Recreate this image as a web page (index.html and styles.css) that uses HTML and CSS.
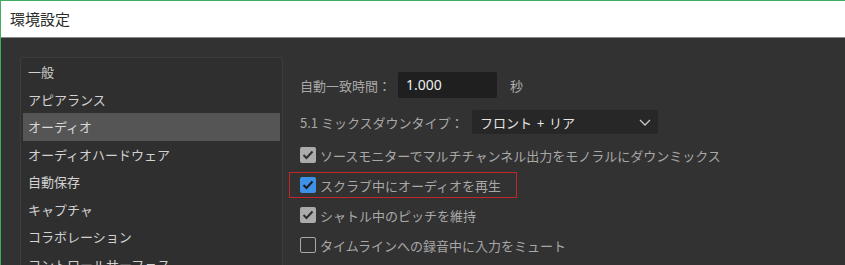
FILE: index.html
```html
<!DOCTYPE html>
<html lang="ja">
<head>
    <meta charset="UTF-8">
    <title>環境設定</title>
    <link rel="stylesheet" href="styles.css">
</head>
<body>

    <div class="window">

        <!-- Title bar -->
        <div class="titlebar">環境設定</div>

        <!-- Main area -->
        <div class="content">

            <!-- Category list -->
            <ul class="sidebar">
                <li class="item">一般</li>
                <li class="item">アピアランス</li>
                <li class="item selected">オーディオ</li>
                <li class="item">オーディオハードウェア</li>
                <li class="item">自動保存</li>
                <li class="item">キャプチャ</li>
                <li class="item">コラボレーション</li>
                <li class="item">コントロールサーフェス</li>
            </ul>

            <!-- Settings -->
            <div class="settings">
                <div class="row">
                    <span class="label label-time">自動一致時間：</span>
                    <span class="input">1.000</span>
                    <span class="unit">秒</span>
                </div>

                <div class="row row-select">
                    <span class="label label-mix">5.1 ミックスダウンタイプ：</span>
                    <span class="select">
                        <span class="select-value">フロント + リア</span>
                        <svg class="chevron" width="12" height="7" viewBox="0 0 12 7">
                            <path d="M1 1 L6 6 L11 1" fill="none" stroke="#c8c8c8" stroke-width="1.3"/>
                        </svg>
                    </span>
                </div>

                <div class="check">
                    <span class="box box-disabled">
                        <svg width="12" height="10" viewBox="0 0 12 10"><path d="M1.5 5 L4.5 8 L10.5 1.5" fill="none" stroke="#2e2e2e" stroke-width="2"/></svg>
                    </span>
                    ソースモニターでマルチチャンネル出力をモノラルにダウンミックス
                </div>

                <div class="check highlight">
                    <span class="box box-on">
                        <svg width="12" height="10" viewBox="0 0 12 10"><path d="M1.5 5 L4.5 8 L10.5 1.5" fill="none" stroke="#1a1a1a" stroke-width="2"/></svg>
                    </span>
                    スクラブ中にオーディオを再生
                </div>

                <div class="check">
                    <span class="box box-disabled">
                        <svg width="12" height="10" viewBox="0 0 12 10"><path d="M1.5 5 L4.5 8 L10.5 1.5" fill="none" stroke="#2e2e2e" stroke-width="2"/></svg>
                    </span>
                    シャトル中のピッチを維持
                </div>

                <div class="check">
                    <span class="box box-off"></span>
                    タイムラインへの録音中に入力をミュート
                </div>
            </div>
        </div>
    </div>

</body>
</html>
```

FILE: styles.css
```css
/* === Global === */
body {
    margin: 0;
    width: 845px;
    height: 265px;
    overflow: hidden;
    font-family: "Noto Sans CJK JP", "Noto Sans", sans-serif;
    background: #323232;
}

/* === Window frame === */
.window {
    border-top: 1px solid #3fae5e;
    border-left: 1px solid #3fae5e;
    height: 264px;
    display: flex;
    flex-direction: column;
}

.titlebar {
    height: 36px;
    background: #ffffff;
    border-bottom: 1px solid #8a8a8a;
    color: #2a2a2a;
    font-size: 15px;
    line-height: 36px;
    padding-left: 9px;
}

/* === Main area === */
.content {
    flex: 1;
    display: flex;
    align-items: flex-start;
    padding: 19px 0 0 19px;
    background: #323232;
    overflow: hidden;
}

/* === Category list === */
.sidebar {
    list-style: none;
    margin: 0;
    padding: 0 2px;
    width: 257px;
    height: 240px;
    background: #2f2f2f;
    border: 1px solid #3d3d3d;
    border-radius: 2px;
    flex-shrink: 0;
}

.item {
    height: 27.5px;
    line-height: 27.5px;
    padding-left: 5px;
    color: #d2d2d2;
    font-size: 13px;
    white-space: nowrap;
}

.item.selected {
    background: #555555;
    color: #d8d8d8;
}

/* === Settings column === */
.settings {
    margin-left: 17px;
    padding-top: 15px;
    display: flex;
    flex-direction: column;
    color: #a8a8a8;
    font-size: 13px;
}

.row {
    display: flex;
    align-items: center;
    height: 26px;
}

.row-select {
    margin-top: 12px;
    height: 24px;
}

.label-time { width: 98px; }
.label-mix { width: 172px; }

.input {
    width: 91px;
    height: 26px;
    line-height: 26px;
    padding-left: 8px;
    background: #1f1f1f;
    border-radius: 2px;
    color: #ececec;
    font-family: "Noto Sans", sans-serif;
    font-size: 14px;
}

.unit {
    margin-left: 13px;
    color: #b0b0b0;
}

.select {
    width: 178px;
    height: 24px;
    padding-left: 8px;
    display: flex;
    align-items: center;
    justify-content: space-between;
    background: #272727;
    border-radius: 2px;
    color: #e4e4e4;
    font-size: 13px;
}

.select-value { word-spacing: 2px; }

.chevron { margin-right: 7px; }

/* === Checkbox rows === */
.check {
    display: flex;
    align-items: center;
    gap: 4px;
    width: fit-content;
    height: 24px;
    margin-top: 4px;
    margin-left: -11px;
    padding: 0 8px 0 10px;
    border: 1px solid transparent;
    white-space: nowrap;
}

.row-select + .check { margin-top: 8px; }

.highlight {
    border-color: #c0262a;
    width: 208px;
}

.box {
    width: 16px;
    height: 16px;
    border-radius: 2px;
    display: flex;
    align-items: center;
    justify-content: center;
    flex-shrink: 0;
    box-sizing: border-box;
}

.box-disabled { background: #ababab; }
.box-on { background: #3d92e8; }
.box-off { border: 1.5px solid #a8a8a8; }
```
